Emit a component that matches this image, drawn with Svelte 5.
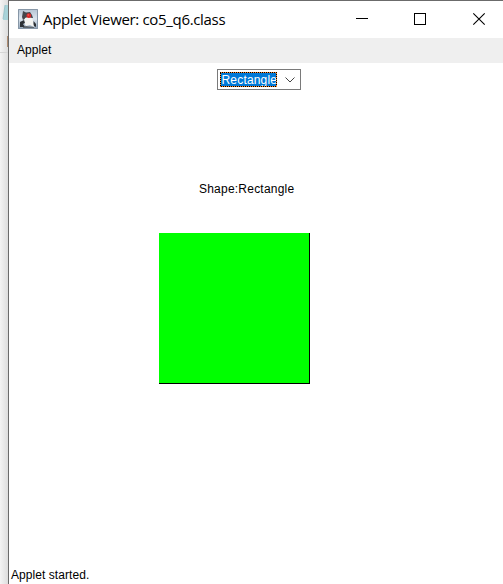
<script>
  const shape = 'Rectangle';
</script>

<div class="screen">
  <div class="behind">
    <svg width="8" height="584" viewBox="0 0 8 584">
      <defs>
        <linearGradient id="edge"><stop offset="0" stop-color="#f4f4f4" /><stop offset="1" stop-color="#dddddd" /></linearGradient>
      </defs>
      <rect width="8" height="584" fill="url(#edge)" />
      <path d="M5 5h3v15H3z" fill="#a9d3d9" /><path d="M5 5L3 19" stroke="#83b5bd" stroke-width=".6" />
      <path d="M0 52.5h8" stroke="#d6d6d6" />
      <path d="M7.7 36v11" stroke="#a47b5a" />
    </svg>
  </div>
  <main class="window">
    <header>
      <svg class="logo" width="20" height="20" viewBox="0 0 20 20">
        <defs>
          <linearGradient id="bg" x2="0" y2="1"><stop offset="0" stop-color="#b4c3d2" /><stop offset=".5" stop-color="#dce5ee" /><stop offset="1" stop-color="#8fa3b8" /></linearGradient>
        </defs>
        <rect width="20" height="20" fill="url(#bg)" />
        <path d="M.5 .5h19v19H.5z" fill="none" stroke="#8797a7" />
        <path d="M5 2l3 1.500 4-.5 2 3 1 3-3 0-4 0-3 2-1-3z" fill="#45474c" />
        <path d="M7 9l3-1 4 1 1.500 4 .5 5-4-2-4 1-2-3z" fill="#f4f4f1" />
        <path d="M2 13l4-2 1 3-2 1 2 3-5 0zM15.500 12l2.500 3 0 3-2-1-.5-2z" fill="#2c3035" />
        <path d="M5 18l3-1 3 .5 5 .5v1H5z" fill="#5f666e" />
        <circle cx="10.800" cy="6.700" r="2.400" fill="#dc2829" /><circle cx="10.300" cy="6" r=".8" fill="#ec6963" />
      </svg>
      <h1>Applet Viewer: co5_q6.class</h1>
      <svg class="controls" width="130" height="14" viewBox="0 0 130 14" fill="none" stroke="#000">
        <path d="M0 6.5h12M58.5 1.5h11v11h-11z" shape-rendering="crispEdges" />
        <path d="M117.3 1.3l11.4 11.4M128.7 1.3l-11.4 11.4" stroke-width="1.1" />
      </svg>
    </header>
    <nav><span>Applet</span></nav>
    <section>
      <div class="choice">
        <span class="selected">{shape}
          <svg class="focus" width="57" height="15" viewBox="0 0 57 15" fill="none" shape-rendering="crispEdges">
            <rect x=".5" y=".5" width="56" height="14" stroke="#000" />
            <rect x=".5" y=".5" width="56" height="14" stroke="#ff8728" stroke-dasharray="1 1" />
          </svg>
        </span>
        <svg width="10" height="6" viewBox="0 0 10 6" fill="none" stroke="#444"><path d="M.5 .5L5 5 9.5 .5" /></svg>
      </div>
      <p>Shape:{shape}</p>
      <div class="shape"></div>
    </section>
    <footer>Applet started.</footer>
  </main>
</div>

<style>
  .screen { width: 503px; height: 584px; display: flex; overflow: hidden; background: #fff; font: 12px/14px "Liberation Sans", Arial, sans-serif; color: #000; }
  .behind { width: 8px; flex: none; }
  .behind svg { display: block; }
  .window { box-sizing: border-box; width: 495px; height: 584px; border-left: 1px solid #6b6b6b; border-top: 1px solid #6b6b6b; display: flex; flex-direction: column; }
  header { height: 37px; flex: none; display: flex; align-items: flex-start; }
  .logo { margin: 8px 0 0 9px; flex: none; }
  h1 { margin: 7px 0 0 5px; width: 313px; font: 400 15px/22px "Open Sans", "Noto Sans", sans-serif; letter-spacing: -0.33px; white-space: nowrap; }
  .controls { flex: none; margin-top: 11px; }
  nav { height: 25px; flex: none; background: #efefef; }
  nav span { display: block; padding: 5px 0 0 8px; letter-spacing: 0.05px; }
  section { flex: 1; display: flex; flex-direction: column; align-items: flex-start; }
  .choice { box-sizing: border-box; width: 84px; height: 21px; margin: 6px 0 0 208px; border: 1px solid #7a7a7a; padding: 2px 5px 2px 2px; display: flex; align-items: center; justify-content: space-between; }
  .selected { position: relative; box-sizing: border-box; width: 57px; height: 15px; background: #0078d7; color: #fff; line-height: 16px; letter-spacing: 0.18px; padding-left: 1.5px; white-space: nowrap; }
  .focus { position: absolute; left: 0; top: 0; }
  p { margin: 92px 0 0 190px; letter-spacing: 0.22px; white-space: nowrap; }
  .shape { box-sizing: border-box; width: 151px; height: 151px; margin: 37px 0 0 150px; background: #0f0; border-right: 1px solid #000; border-bottom: 1px solid #000; }
  footer { height: 16px; padding-left: 2px; letter-spacing: 0.06px; }
</style>
